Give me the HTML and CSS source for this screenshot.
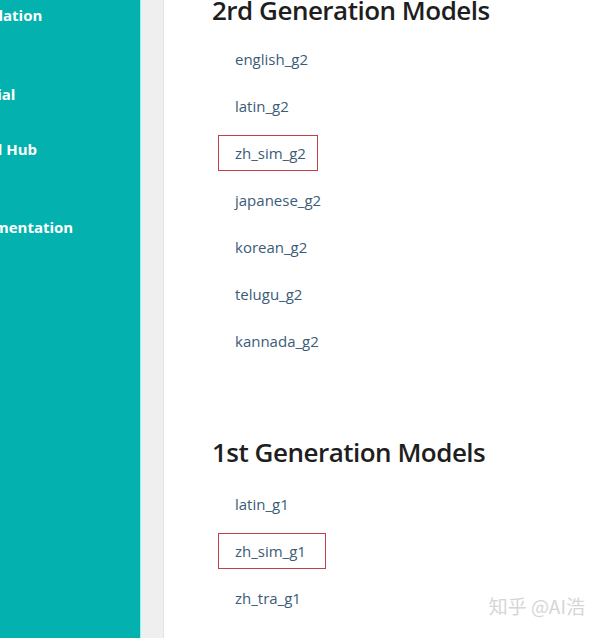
FILE: index.html
```html
<!DOCTYPE html>
<html lang="en">
<head>
  <meta charset="UTF-8">
  <meta name="viewport" content="width=device-width, initial-scale=1.0">
  <title>EasyOCR Model Hub</title>
  <link rel="stylesheet" href="styles.css">
</head>
<body>
  <div class="page">
    <nav class="sidebar">
      <div class="nav-item nav-first">Installation</div>
      <div class="nav-sub">Guide</div>
      <div class="nav-item nav-tutorial">Tutorial</div>
      <div class="nav-item nav-hub">Model Hub</div>
      <div class="nav-item nav-docs">Documentation</div>
    </nav>

    <div class="gutter"></div>

    <main class="content">
      <div class="section section-g2">
        <h2>2rd Generation Models</h2>
        <ul class="models">
          <li><a href="#">english_g2</a></li>
          <li><a href="#">latin_g2</a></li>
          <li><a href="#" class="marked">zh_sim_g2</a></li>
          <li><a href="#">japanese_g2</a></li>
          <li><a href="#">korean_g2</a></li>
          <li><a href="#">telugu_g2</a></li>
          <li><a href="#">kannada_g2</a></li>
        </ul>
      </div>

      <div class="section section-g1">
        <h2>1st Generation Models</h2>
        <ul class="models">
          <li><a href="#">latin_g1</a></li>
          <li><a href="#" class="marked wide">zh_sim_g1</a></li>
          <li><a href="#">zh_tra_g1</a></li>
        </ul>
      </div>
    </main>
  </div>

  <div class="watermark">知乎 @AI浩</div>
</body>
</html>
```

FILE: styles.css
```css
body {
  margin: 0;
  font-family: 'Open Sans', 'Noto Sans', sans-serif;
  background: #fff;
  color: #222;
  overflow: hidden;
}
.page {
  display: flex;
  height: 638px;
}
.sidebar {
  width: 140px;
  flex-shrink: 0;
  background: #03b2ae;
  border-right: 1px solid #8ef3f0;
  overflow: hidden;
  color: #fff;
}
.nav-item {
  margin-left: -44px;
  white-space: nowrap;
  font-weight: 700;
  font-size: 15px;
  line-height: 20px;
}
.nav-first {
  margin-top: 5px;
}
.nav-sub {
  margin-left: -38px;
  font-size: 12px;
  line-height: 16px;
  margin-top: 4px;
}
.nav-tutorial {
  margin-top: 39px;
}
.nav-hub {
  margin-top: 35px;
}
.nav-docs {
  margin-top: 58px;
}
.gutter {
  width: 22px;
  flex-shrink: 0;
  background: #efefef;
  border-right: 1px solid #e2e2e2;
}
.content {
  flex: 1;
  padding-left: 48px;
}
.section h2 {
  margin: 0;
  font-size: 26px;
  font-weight: 600;
  letter-spacing: -0.5px;
  line-height: 36px;
  color: #1e1e1e;
}
.section-g2 h2 {
  margin-top: -8px;
}
.section-g2 .models {
  margin-top: 7px;
}
.section-g1 {
  margin-top: 70px;
}
.section-g1 h2 {
  margin-bottom: 10px;
}
.models {
  list-style: none;
  margin: 0;
  padding: 0 0 0 23px;
}
.models li {
  height: 47px;
  display: flex;
  align-items: center;
}
.models a {
  color: #3b5c78;
  text-decoration: none;
  font-size: 15px;
}
.marked {
  height: 34px;
  display: flex;
  align-items: center;
  padding: 0 11px 0 16px;
  margin-left: -17px;
  border: 1px solid #c3404b;
}
.marked.wide {
  padding-right: 19px;
}
.watermark {
  position: absolute;
  right: 15px;
  bottom: 19px;
  font-family: 'Noto Sans CJK SC', sans-serif;
  font-size: 19px;
  color: #d6d6d6;
  text-shadow: 0 0 1px #fff;
}
```
